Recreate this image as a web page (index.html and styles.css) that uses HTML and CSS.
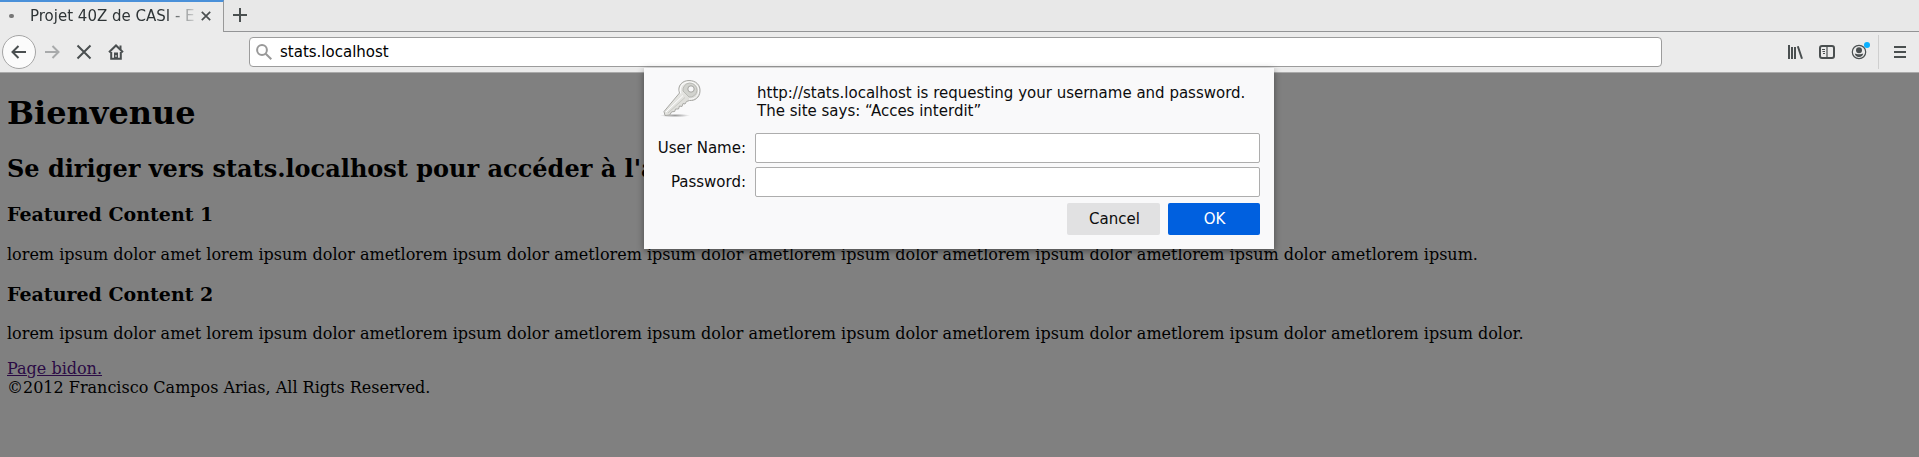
FILE: index.html
```html
<!DOCTYPE html>
<html lang="fr">
<head>
<meta charset="utf-8">
<title>Projet 40Z de CASI</title>
<link rel="stylesheet" href="styles.css">
</head>
<body>
<div class="tabs">
  <div class="tab">
    <span class="loading"></span>
    <span class="tab-title">Projet 40Z de CASI - E</span>
    <svg class="tab-close" width="10" height="10" viewBox="0 0 10 10"><path d="M.8.8l8.4 8.4M9.2.8L.8 9.2"/></svg>
  </div>
  <div class="tab-rest">
    <svg width="14" height="14" viewBox="0 0 14 14"><path d="M7 0v14M0 7h14"/></svg>
  </div>
</div>
<div class="toolbar">
  <div class="nav">
    <span class="back"><svg width="16" height="16" viewBox="0 0 16 16"><path d="M15 8H2M7.500 2L1.500 8l6 6"/></svg></span>
    <svg class="forward" width="16" height="16" viewBox="0 0 16 16"><path d="M1 8h13M8.500 2l6 6-6 6"/></svg>
    <svg class="stop" width="16" height="16" viewBox="0 0 16 16"><path d="M1.500 1.500l13 13M14.500 1.500l-13 13"/></svg>
    <svg class="home" width="16" height="16" viewBox="0 0 16 16"><path d="M1 8.300L8 1.500l7 6.800M3.200 8v6.800h9.600V8"/><path class="solid" d="M6 15V8.500h4V15zM11.500 1.500h2v4h-2z"/><path class="knob" d="M7.500 11h1v2h-1z"/></svg>
  </div>
  <div class="urlbar">
    <svg width="16" height="16" viewBox="0 0 16 16"><circle cx="6" cy="6" r="4.900"/><path d="M9.700 9.700l5.600 5.600"/></svg>
    <span>stats.localhost</span>
  </div>
  <div class="tools">
    <svg width="16" height="16" viewBox="0 0 16 16"><path d="M2 1v14M5 3v12M8 3v12M10.800 2.300L15 14.700"/></svg>
    <svg width="16" height="16" viewBox="0 0 16 16"><rect x="1" y="2" width="14" height="12" rx="2"/><path class="thin" d="M8 2v12M3 5.500h3M3.500 7.500H6M4 9.500h2"/></svg>
    <span class="account"><svg width="16" height="16" viewBox="0 0 16 16"><circle class="thin" cx="8" cy="8" r="6.700"/><circle class="solid" cx="8" cy="6.200" r="3"/><path class="solid" d="M3.800 9.400c2 1.100 6.400 1.100 8.400 0-.3 2-1.800 3.500-4.200 3.500S4.100 11.400 3.800 9.400z"/></svg><i class="badge"></i></span>
    <span class="menu"><svg width="12" height="12" viewBox="0 0 12 12"><path d="M0 1h12M0 6h12M0 11h12"/></svg></span>
  </div>
</div>
<main class="page">
  <h1>Bienvenue</h1>
  <h2>Se diriger vers stats.localhost pour accéder à l'a</h2>
  <h3>Featured Content 1</h3>
  <p>lorem ipsum dolor amet lorem ipsum dolor ametlorem ipsum dolor ametlorem ipsum dolor ametlorem ipsum dolor ametlorem ipsum dolor ametlorem ipsum dolor ametlorem ipsum.</p>
  <h3>Featured Content 2</h3>
  <p>lorem ipsum dolor amet lorem ipsum dolor ametlorem ipsum dolor ametlorem ipsum dolor ametlorem ipsum dolor ametlorem ipsum dolor ametlorem ipsum dolor ametlorem ipsum dolor.</p>
  <a class="link">Page bidon.</a>
  <footer>©2012 Francisco Campos Arias, All Rigts Reserved.</footer>
</main>
<section class="dialog">
  <div class="message">
    <svg class="key" width="42" height="40" viewBox="0 0 42 40">
      <defs><linearGradient id="metal" x1="0" y1="0" x2="1" y2="1"><stop offset="0" stop-color="#f4f4f1"/><stop offset="1" stop-color="#d0d0cb"/></linearGradient>
      <radialGradient id="shade"><stop offset="0" stop-color="#999"/><stop offset="1" stop-color="#999" stop-opacity="0"/></radialGradient></defs>
      <ellipse cx="13" cy="36.500" rx="15" ry="1.800" fill="url(#shade)" stroke="none"/>
      <path d="M17.500 14C15 7 20 1.500 27 1.500c7 0 11.500 4.500 11 11-.5 6-5 9.500-10.500 9l-3 1-1.500 2.500-2-.5-1 3-2.500-.5-1 3-3 0-.8 2.500-3 .3-2 3.200-4.700.5-1-4z" fill="url(#metal)" stroke="#a8a8a4"/>
      <path d="M18.800 14.500C16.500 8 21 3 27 3c6 0 10 4 9.600 9.300-.4 5-4.600 8.200-9.600 7.700" fill="none" stroke="#fff"/>
      <path d="M21 12a7 7 0 1 1 6 6z" fill="#d2d3ce" stroke="#b9bab5"/>
      <circle cx="29" cy="10" r="3.200" fill="#f7f7f7" stroke="#a3a39f"/>
      <path d="M4 33L21 16.500" fill="none" stroke="#fff"/>
      <path d="M6 34L23 18.500" fill="none" stroke="#c8c9c4"/>
    </svg>
    <div class="says">http://stats.localhost is requesting your username and password.<br>The site says: “Acces interdit”</div>
  </div>
  <div class="fields">
    <label for="user">User Name:</label><input id="user" type="text">
    <label for="pass">Password:</label><input id="pass" type="password">
  </div>
  <div class="buttons"><button class="cancel">Cancel</button><button class="ok">OK</button></div>
</section>
</body>
</html>
```
FILE: styles.css
```css
* { box-sizing: border-box; }
body {
  margin: 0;
  height: 457px;
  overflow: hidden;
  display: flex;
  flex-direction: column;
  background: #808080;
  font: 15px/18px "DejaVu Sans", sans-serif;
  color: #0c0c0d;
}
svg { display: block; flex: none; fill: none; stroke: #4a4f50; stroke-width: 2; overflow: visible; }
.solid { fill: #4a4f50; stroke: none; }
.knob { fill: #ebebeb; stroke: none; }
.thin { stroke-width: 1.2; }

.tabs { display: flex; height: 32px; flex: none; background: #e8e8e8; }
.tab {
  width: 224px;
  display: flex;
  align-items: center;
  padding: 0 11px 2px 9px;
  background: #ebebeb;
  border-top: 2px solid #4a90d9;
  border-right: 1px solid #999;
}
.loading { width: 5px; height: 4px; border-radius: 2px; background: #777; }
.tab-title {
  margin-left: 16px;
  width: 165px;
  white-space: nowrap;
  color: #2e3436;
  -webkit-mask-image: linear-gradient(to right, #000 135px, transparent 170px);
  mask-image: linear-gradient(to right, #000 135px, transparent 170px);
}
.tab-close { margin-left: 6px; stroke-width: 1.7; }
.tab-rest { flex: 1; padding: 8px 9px; border-bottom: 1px solid #939496; }

.toolbar {
  height: 41px;
  flex: none;
  display: flex;
  align-items: center;
  background: #ebebeb;
  border-bottom: 1px solid #aaa;
}
.nav { display: flex; align-items: center; width: 249px; padding-left: 2px; }
.back {
  width: 34px;
  height: 34px;
  display: grid;
  place-items: center;
  border: 1px solid #a5a5a5;
  border-radius: 50%;
  background: #fbfbfb;
}
.forward { margin-left: 8px; stroke: #a8aaab; }
.stop { margin-left: 16px; }
.home { margin-left: 16px; }
.urlbar {
  width: 1413px;
  height: 30px;
  display: flex;
  align-items: center;
  gap: 8px;
  padding-left: 6px;
  background: #fff;
  border: 1px solid #9c9c9c;
  border-radius: 4px;
  color: #000;
}
.urlbar svg { stroke: #999; }
.tools { display: flex; align-items: center; margin-left: 125px; }
.tools svg + svg { margin-left: 16px; }
.account { position: relative; margin-left: 16px; }
.badge { position: absolute; left: 13px; top: -2px; width: 6px; height: 6px; border-radius: 50%; background: #0ab0ff; }
.menu { height: 34px; display: flex; align-items: center; margin-left: 11px; padding-left: 15px; border-left: 1px solid #cfcfcf; }

.page { flex: 1; padding: 0 7px; font: 16px/19px "DejaVu Serif", serif; color: #000; }
h1, h2, h3, p { margin: 0; white-space: nowrap; }
h1 { padding-top: 21px; font-size: 32px; line-height: 38px; }
h2 { padding-top: 23px; font-size: 24px; line-height: 28px; }
h3 { padding-top: 19px; font-size: 19px; line-height: 23px; }
h2 + h3 { padding-top: 20px; }
p { padding-top: 18px; }
h2 + h3 + p { padding-top: 19px; }
p + .link { display: block; margin-top: 16px; }
.link { width: max-content; color: #2b0b45; text-decoration: underline; }

.dialog {
  position: absolute;
  left: 644px;
  top: 68px;
  width: 630px;
  height: 181px;
  padding: 11px 14px 14px 10px;
  display: flex;
  flex-direction: column;
  background: #f9f9fa;
  box-shadow: 0 2px 7px rgba(0, 0, 0, .42);
}
.message { display: flex; flex: none; height: 54px; }
.key { margin-left: 8px; stroke-width: 1; }
.says { margin: 5px 0 0 53px; white-space: nowrap; }
.fields { display: grid; grid-template-columns: 92px 505px; gap: 4px 9px; align-items: center; text-align: right; white-space: nowrap; }
input { width: 505px; height: 30px; margin: 0; border: 1px solid #adadad; border-radius: 2px; background: #fff; }
.buttons { display: flex; justify-content: flex-end; gap: 8px; margin-top: 6px; }
button { width: 92px; height: 32px; padding: 0; border: 0; border-radius: 2px; font: inherit; }
.cancel { width: 93px; padding-left: 2px; background: #e1e1e2; color: #0c0c0d; }
.ok { padding-left: 1px; background: #0060df; color: #fff; }
```
